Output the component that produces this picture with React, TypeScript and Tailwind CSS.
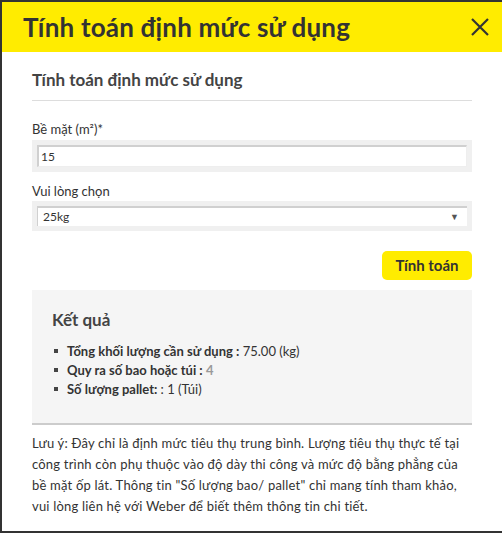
const font = { fontFamily: 'Lato, "Noto Sans", sans-serif' };

export default function App() {
  return (
    <div className="w-[502px] h-[533px] bg-[#333] pt-[2px] pl-[2px] pb-[2px] overflow-hidden" style={font}>
      <div className="h-full bg-white flex flex-col">
        <div className="h-[50px] shrink-0 bg-[#ffec00] flex items-center justify-between pl-[21px] pr-[12px]">
          <h1 className="text-[26px] font-bold text-[#333] tracking-[0.2px]">Tính toán định mức sử dụng</h1>
          <svg width="20" height="20" viewBox="0 0 20 20" className="text-[#333]">
            <path d="M2 2 L18 18 M18 2 L2 18" stroke="currentColor" strokeWidth="2.2" />
          </svg>
        </div>

        <div className="px-[30px] pt-[18px]">
          <h2 className="text-[17px] leading-[20px] font-bold text-[#444] pb-[10px] border-b border-[#ddd]">Tính toán định mức sử dụng</h2>

          <label className="block text-[13px] leading-[16px] text-[#333] mt-[20px]">Bề mặt (m²)*</label>
          <div className="mt-[3px] bg-[#f0f0f0] p-[5px]">
            <div className="h-[22px] bg-white border-t-2 border-l-2 border-[#d0d0d0] border-b border-r border-b-[#eee] border-r-[#eee] flex items-center px-[2px] text-[12px] text-[#333]">15</div>
          </div>

          <label className="block text-[13px] leading-[16px] text-[#333] mt-[11px]">Vui lòng chọn</label>
          <div className="mt-[2px] bg-[#f0f0f0] p-[5px]">
            <div className="h-[20px] bg-white border-t-2 border-l border-[#d0d0d0] flex items-center justify-between pl-[5px] pr-[8px] text-[12px] text-[#333]">
              <span>25kg</span>
              <span className="text-[9px] text-[#555]">▼</span>
            </div>
          </div>

          <div className="flex justify-end mt-[20px]">
            <button className="h-[29px] w-[90px] rounded-[5px] bg-[#ffec00] text-[15px] font-bold text-[#333]">Tính toán</button>
          </div>

          <div className="mt-[10px] bg-[#f5f5f5] border-b-2 border-[#ccc] pl-[20px] pt-[20px] h-[135px]">
            <h3 className="text-[17px] leading-[20px] font-bold text-[#444]">Kết quả</h3>
            <ul className="mt-[13px] text-[13px] leading-[16px] text-[#333] space-y-[3px]">
              <li className="flex items-center gap-[9px]"><span className="w-[4px] h-[4px] bg-[#444] ml-[2px]" /><span><b>Tổng khối lượng cần sử dụng :</b> 75.00 (kg)</span></li>
              <li className="flex items-center gap-[9px]"><span className="w-[4px] h-[4px] bg-[#444] ml-[2px]" /><span><b>Quy ra số bao hoặc túi :</b> <b className="text-[#999]">4</b></span></li>
              <li className="flex items-center gap-[9px]"><span className="w-[4px] h-[4px] bg-[#444] ml-[2px]" /><span><b>Số lượng pallet: </b>: 1 (Túi)</span></li>
            </ul>
          </div>

          <p className="mt-[8px] text-[13px] leading-[21px] tracking-[0.2px] text-[#333]">
            Lưu ý: Đây chỉ là định mức tiêu thụ trung bình. Lượng tiêu thụ thực tế tại công trình còn phụ thuộc vào độ dày thi công và mức độ bằng phẳng của bề mặt ốp lát. Thông tin "Số lượng bao/ pallet" chỉ mang tính tham khảo, vui lòng liên hệ với Weber để biết thêm thông tin chi tiết.
          </p>
        </div>
      </div>
    </div>
  );
}
